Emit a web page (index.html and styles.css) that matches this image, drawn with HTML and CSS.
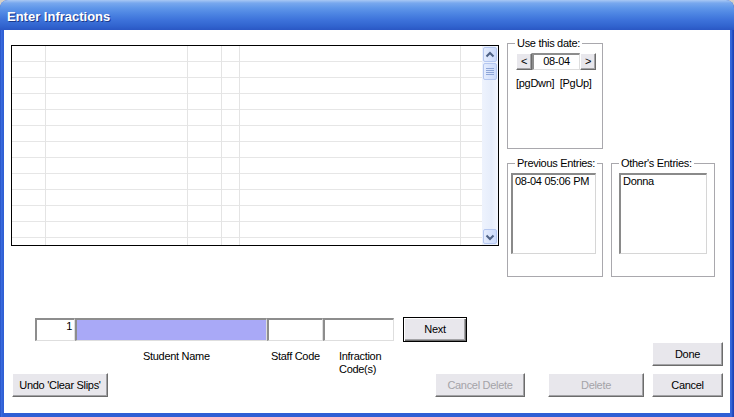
FILE: index.html
```html
<!DOCTYPE html>
<html>
<head>
<meta charset="utf-8">
<title>Enter Infractions</title>
<link rel="stylesheet" href="styles.css">
</head>
<body>
<div class="window">
  <div class="titlebar"><span class="title">Enter Infractions</span></div>
  <div class="client">
    <div class="top">
      <div class="grid">
        <div class="grid-body"></div>
        <div class="vscroll">
          <div class="sb-btn"><svg width="12" height="12" viewBox="0 0 12 12"><polyline points="2.5,7.5 6,4 9.5,7.5" fill="none" stroke="#4d6185" stroke-width="2"/></svg></div>
          <div class="sb-thumb"><svg width="8" height="8" viewBox="0 0 8 8"><path d="M0 0.5H8M0 2.5H8M0 4.5H8M0 6.5H8" stroke="#8ea6d8" stroke-width="1"/></svg></div>
          <div class="sb-track"></div>
          <div class="sb-btn"><svg width="12" height="12" viewBox="0 0 12 12"><polyline points="2.5,4.5 6,8 9.5,4.5" fill="none" stroke="#4d6185" stroke-width="2"/></svg></div>
        </div>
      </div>
      <div class="side">
        <div class="group date-group">
          <div class="group-title">Use this date:</div>
          <div class="spin">
            <button class="btn spin-btn">&lt;</button>
            <div class="field date">08-04</div>
            <button class="btn spin-btn">&gt;</button>
          </div>
          <div class="keys">[pgDwn]&nbsp; [PgUp]</div>
        </div>
        <div class="entries">
          <div class="group prev">
            <div class="group-title">Previous Entries:</div>
            <div class="list prev-list">08-04 05:06 PM</div>
          </div>
          <div class="group others">
            <div class="group-title">Other's Entries:</div>
            <div class="list others-list">Donna</div>
          </div>
        </div>
      </div>
    </div>
    <div class="bottom">
      <div class="entry-row">
        <div class="field num">1</div>
        <div class="field name"></div>
        <div class="field staff"></div>
        <div class="field code"></div>
        <button class="btn next">Next</button>
      </div>
      <div class="labels-row">
        <div class="labels">
          <div class="lbl lbl-name">Student Name</div>
          <div class="lbl lbl-staff">Staff Code</div>
          <div class="lbl lbl-code">Infraction<br>Code(s)</div>
        </div>
        <button class="btn done">Done</button>
      </div>
      <div class="buttons-row">
        <button class="btn undo">Undo 'Clear Slips'</button>
        <button class="btn cancel-delete" disabled>Cancel Delete</button>
        <button class="btn delete" disabled>Delete</button>
        <button class="btn cancel">Cancel</button>
      </div>
    </div>
  </div>
</div>
</body>
</html>
```
FILE: styles.css
```css
html, body {
  margin: 0;
  padding: 0;
}
body {
  background: #d4d0c8;
  font-family: "Liberation Sans", Arial, sans-serif;
  font-size: 11px;
  line-height: 13px;
  letter-spacing: -0.3px;
  color: #000;
}
.window {
  width: 734px;
  height: 417px;
  display: flex;
  flex-direction: column;
  background: linear-gradient(to right, #1d44b8 0, #3c6ee0 1px, #2f5fd5 3px, #2f5fd5 730px, #3c6ee0 731px, #1d44b8 733px);
  border-radius: 8px 8px 0 0;
  overflow: hidden;
}
.titlebar {
  height: 30px;
  flex: none;
  box-sizing: border-box;
  padding-left: 7px;
  background: linear-gradient(to bottom, #a9c8f4 0, #78a8ee 3px, #5f96e9 8px, #4c84e2 14px, #3d72da 20px, #3164cf 26px, #2a57c4 30px);
}
.title {
  display: block;
  margin-top: 9px;
  font-size: 13px;
  line-height: 15px;
  font-weight: bold;
  letter-spacing: 0;
  color: #fff;
  text-shadow: 1px 1px 0 #1b3a8c;
}
.client {
  flex: 1;
  background: #fff;
  margin: 0 4px 4px 4px;
}
.top {
  display: flex;
  align-items: flex-start;
}
.grid {
  margin: 15px 0 0 7px;
  width: 488px;
  height: 201px;
  box-sizing: border-box;
  border: 1px solid #000;
  display: flex;
}
.grid-body {
  flex: 1;
  background-color: #fff;
  background-image:
    linear-gradient(#e4e4e4, #e4e4e4),
    linear-gradient(#e4e4e4, #e4e4e4),
    linear-gradient(#e4e4e4, #e4e4e4),
    linear-gradient(#e4e4e4, #e4e4e4),
    linear-gradient(#e4e4e4, #e4e4e4),
    repeating-linear-gradient(to bottom, transparent 0, transparent 15px, #e6e6e6 15px, #e6e6e6 16px);
  background-repeat: no-repeat;
  background-size: 1px 100%, 1px 100%, 1px 100%, 1px 100%, 1px 100%, 100% 100%;
  background-position: 33px 0, 175px 0, 209px 0, 227px 0, 448px 0, 0 0;
}
.vscroll {
  width: 16px;
  display: flex;
  flex-direction: column;
  background: linear-gradient(to right, #eef3fd, #e6edfb 60%, #f3f6fe);
}
.sb-btn, .sb-thumb {
  flex: none;
  margin: 1px 1px 0 1px;
  height: 15px;
  box-sizing: border-box;
  border: 1px solid #b5c7f0;
  border-radius: 2px;
  background: linear-gradient(to right, #e4ecfd, #cbdafb);
  display: flex;
  align-items: center;
  justify-content: center;
}
.sb-thumb {
  height: 17px;
  margin-top: 1px;
}
.sb-track {
  flex: 1;
}
.sb-btn:last-child {
  margin-bottom: 1px;
}
.side {
  margin: 13px 0 0 8px;
}
.group {
  box-sizing: border-box;
  border: 1px solid #a9a8ad;
}
.group-title {
  width: fit-content;
  margin: -7px 0 0 7px;
  padding: 0 2px;
  background: #fff;
  line-height: 13px;
  white-space: nowrap;
}
.date-group {
  width: 96px;
  height: 106px;
}
.spin {
  display: flex;
  margin: 3px 0 0 8px;
}
.btn {
  font-family: inherit;
  font-size: 11px;
  line-height: 13px;
  letter-spacing: -0.3px;
  color: #000;
  box-sizing: border-box;
  padding: 0;
  background: #e8e7ec;
  border: 1px solid;
  border-color: #fff #6c6c6c #6c6c6c #fff;
  box-shadow: inset -1px -1px 0 #a3a3a6;
  border-radius: 0;
}
.btn:disabled {
  color: #a4a3a8;
}
.spin-btn {
  width: 16px;
  height: 17px;
}
.field {
  box-sizing: border-box;
  background: #fff;
  border-style: solid;
  border-width: 2px 1px 1px 2px;
  border-color: #8d8d8d #dedede #dedede #8d8d8d;
}
.date {
  width: 48px;
  height: 17px;
  text-align: center;
  line-height: 13px;
}
.keys {
  margin: 7px 0 0 8px;
  white-space: nowrap;
}
.entries {
  display: flex;
  gap: 8px;
  margin-top: 14px;
}
.prev {
  width: 96px;
  height: 114px;
}
.others {
  width: 104px;
  height: 114px;
}
.list {
  box-sizing: border-box;
  height: 81px;
  margin-top: 3px;
  padding: 0 2px;
  border-style: solid;
  border-width: 2px 1px 1px 2px;
  border-color: #8a8a8a #d6d6d6 #d6d6d6 #8a8a8a;
  white-space: nowrap;
}
.prev-list {
  width: 85px;
  margin-left: 3px;
}
.others-list {
  width: 88px;
  margin-left: 7px;
}
.bottom {
  margin-top: 40px;
}
.entry-row {
  display: flex;
  align-items: center;
  height: 25px;
  margin-left: 31px;
}
.entry-row .field {
  height: 23px;
}
.num {
  width: 40px;
  text-align: right;
  padding-right: 2px;
}
.name {
  width: 192px;
  background: #a9a9f7;
}
.staff {
  width: 56px;
}
.code {
  width: 71px;
}
.next {
  width: 64px;
  height: 25px;
  margin-left: 9px;
  border: 1px solid #000;
  box-shadow: inset 1px 1px 0 #fff, inset -1px -1px 0 #6c6c6c, inset -2px -2px 0 #a3a3a6;
}
.labels-row {
  display: flex;
  justify-content: space-between;
  align-items: flex-start;
  height: 31px;
}
.labels {
  display: flex;
  margin-left: 139px;
  padding-top: 8px;
}
.lbl-name {
  width: 128px;
}
.lbl-staff {
  width: 68px;
}
.done {
  width: 71px;
  height: 24px;
  margin-right: 7px;
}
.buttons-row {
  display: flex;
  height: 24px;
}
.buttons-row .btn {
  height: 24px;
}
.undo {
  width: 96px;
  margin-left: 8px;
}
.cancel-delete {
  width: 90px;
  margin-left: 327px;
}
.delete {
  width: 96px;
  margin-left: 23px;
}
.cancel {
  width: 71px;
  margin-left: 8px;
}
```
